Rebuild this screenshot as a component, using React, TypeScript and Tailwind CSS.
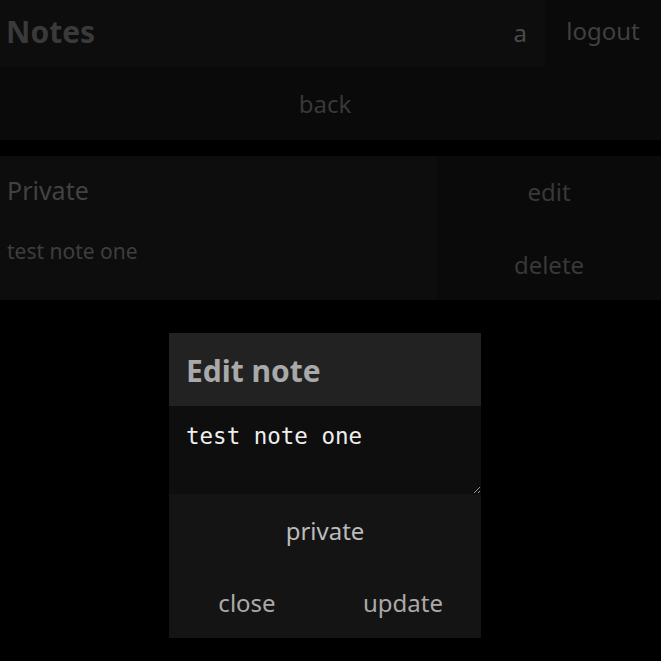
import React from 'react'

export default function App() {
  const sans = { fontFamily: '"Noto Sans", "Open Sans", sans-serif' }

  return (
    <div className="relative w-[661px] h-[661px] bg-black overflow-hidden" style={sans}>
      {/* Header */}
      <div className="flex h-[67px]">
        <div className="flex-1 flex items-center justify-between bg-[#0d0d0d] pl-[6px] pr-[18px] pb-[4px]">
          <h1 className="text-[30px] font-bold text-[#3a3a3a]">Notes</h1>
          <span className="text-[24px] text-[#4a4a4a] pt-[2px]">a</span>
        </div>
        <button className="w-[116px] bg-[#0a0a0a] text-[24px] text-[#404040] pb-[5px]">logout</button>
      </div>

      {/* Back */}
      <div className="flex bg-[#0a0a0a]">
        <button className="w-[650px] h-[73px] text-[24px] text-[#383838]">back</button>
      </div>

      {/* Note card */}
      <div className="mt-[16px] flex h-[144px]">
        <div className="w-[437px] bg-[#0d0d0d] pl-[7px] pt-[18px]">
          <div className="text-[25px] text-[#424242] leading-[32px]">Private</div>
          <div className="mt-[31px] text-[21px] text-[#3e3e3e] leading-[28px]">test note one</div>
        </div>
        <div className="flex-1 flex flex-col bg-[#0a0a0a]">
          <button className="h-[72px] text-[24px] text-[#383838]">edit</button>
          <button className="h-[72px] text-[24px] text-[#383838] pt-[2px]">delete</button>
        </div>
      </div>

      {/* Modal */}
      <div className="absolute left-[169px] top-[333px] w-[312px] flex flex-col">
        <div className="h-[73px] bg-[#222222] flex items-center px-[17px] pt-[2px]">
          <h2 className="text-[30px] font-bold text-[#a9a9a9]">Edit note</h2>
        </div>
        <textarea
          readOnly
          defaultValue="test note one"
          className="block h-[88px] w-full bg-[#0e0e0e] text-[#eeeeee] text-[22.5px] px-[17px] pt-[14px] outline-none"
          style={{ fontFamily: '"DejaVu Sans Mono", monospace' }}
        />
        <div className="bg-[#141414]">
          <button className="w-full h-[72px] text-[24px] text-[#bbbbbb] pt-[2px]">private</button>
          <div className="flex">
            <button className="flex-1 h-[72px] text-[24px] text-[#aaaaaa] pt-[2px]">close</button>
            <button className="flex-1 h-[72px] text-[24px] text-[#aaaaaa] pt-[2px]">update</button>
          </div>
        </div>
      </div>
    </div>
  )
}
